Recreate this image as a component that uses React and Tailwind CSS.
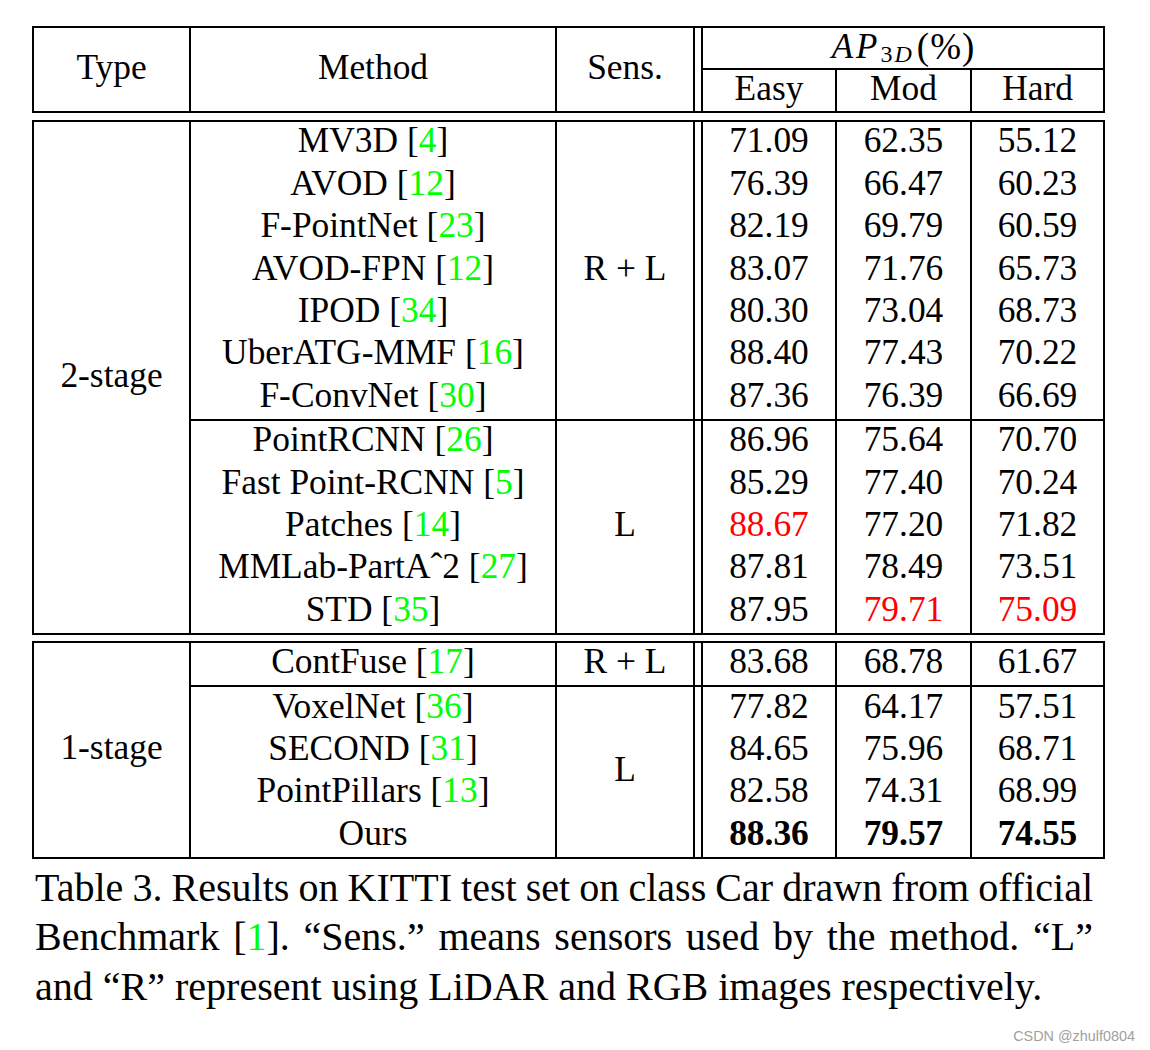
import React from 'react';

const twoStageA = [
  { name: 'MV3D', ref: '4', vals: ['71.09', '62.35', '55.12'] },
  { name: 'AVOD', ref: '12', vals: ['76.39', '66.47', '60.23'] },
  { name: 'F-PointNet', ref: '23', vals: ['82.19', '69.79', '60.59'] },
  { name: 'AVOD-FPN', ref: '12', vals: ['83.07', '71.76', '65.73'] },
  { name: 'IPOD', ref: '34', vals: ['80.30', '73.04', '68.73'] },
  { name: 'UberATG-MMF', ref: '16', vals: ['88.40', '77.43', '70.22'] },
  { name: 'F-ConvNet', ref: '30', vals: ['87.36', '76.39', '66.69'] },
];

const twoStageB = [
  { name: 'PointRCNN', ref: '26', vals: ['86.96', '75.64', '70.70'] },
  { name: 'Fast Point-RCNN', ref: '5', vals: ['85.29', '77.40', '70.24'] },
  { name: 'Patches', ref: '14', vals: ['88.67', '77.20', '71.82'], red: [0] },
  { name: 'MMLab-PartA\u02C62', ref: '27', vals: ['87.81', '78.49', '73.51'] },
  { name: 'STD', ref: '35', vals: ['87.95', '79.71', '75.09'], red: [1, 2] },
];

const oneStageA = [
  { name: 'ContFuse', ref: '17', vals: ['83.68', '68.78', '61.67'] },
];

const oneStageB = [
  { name: 'VoxelNet', ref: '36', vals: ['77.82', '64.17', '57.51'] },
  { name: 'SECOND', ref: '31', vals: ['84.65', '75.96', '68.71'] },
  { name: 'PointPillars', ref: '13', vals: ['82.58', '74.31', '68.99'] },
  { name: 'Ours', vals: ['88.36', '79.57', '74.55'], bold: true },
];

// text cells sit a touch above the geometric middle, like the LaTeX table
const cell = 'flex items-center justify-center pb-[4px]';
const valWidths = ['w-[132px]', 'w-[135px] border-l-2 border-black', 'w-[133px] border-l-2 border-black'];

const Ref = ({ n }) => (
  <span>
    {' '}[<span className="text-[#00ff00]">{n}</span>]
  </span>
);

const Section = ({ rows, sens, first }) => (
  <div className={'flex' + (first ? '' : ' border-t-2 border-black')}>
    <div className="w-[366px] border-l-2 border-black flex flex-col">
      {rows.map((r) => (
        <div key={r.name} className={'h-[42.4px] whitespace-pre ' + cell}>
          {r.name}
          {r.ref && <Ref n={r.ref} />}
        </div>
      ))}
    </div>
    <div className={'w-[138px] border-l-2 border-black ' + cell}>{sens}</div>
    <div className="w-[8px] border-l-2 border-black" />
    <div className="border-l-2 border-black flex flex-col">
      {rows.map((r) => (
        <div key={r.name} className="h-[42.4px] flex">
          {r.vals.map((v, i) => (
            <div
              key={i}
              className={
                valWidths[i] +
                ' ' +
                cell +
                (r.red && r.red.includes(i) ? ' text-[#ff0000]' : '') +
                (r.bold ? ' font-bold' : '')
              }
            >
              {v}
            </div>
          ))}
        </div>
      ))}
    </div>
  </div>
);

const Block = ({ type, sections, className }) => (
  <div className={'w-[1073px] border-2 border-black flex ' + className}>
    <div className={'w-[155px] ' + cell}>{type}</div>
    <div className="flex flex-col">
      {sections.map((s, i) => (
        <Section key={i} rows={s.rows} sens={s.sens} first={i === 0} />
      ))}
    </div>
  </div>
);

export default function App() {
  return (
    <div className="bg-white w-[1150px] h-[1050px] pt-[26px] pl-[32px] text-black font-['Liberation_Serif','Times_New_Roman',serif]">
      <div className="text-[35.4px] leading-none">
        {/* header */}
        <div className="w-[1073px] h-[87px] border-2 border-black flex">
          <div className={'w-[155px] ' + cell}>Type</div>
          <div className={'w-[366px] border-l-2 border-black ' + cell}>Method</div>
          <div className={'w-[138px] border-l-2 border-black ' + cell}>Sens.</div>
          <div className="w-[8px] border-l-2 border-black" />
          <div className="w-[402px] border-l-2 border-black flex flex-col">
            <div className="h-[40px] flex items-center justify-center pb-[3px]">
              <span className="italic text-[35px] tracking-[3px]">AP</span>
              <span className="text-[24px] mt-[14px] tracking-[2px]">
                3<span className="italic">D</span>
              </span>
              <span className="text-[37px] ml-[3px]">(</span>
              <span className="text-[37px] mx-[1px]">%</span>
              <span className="text-[37px]">)</span>
            </div>
            <div className="flex-1 border-t-2 border-black flex">
              <div className={'w-[132px] ' + cell}>Easy</div>
              <div className={'w-[135px] border-l-2 border-black ' + cell}>Mod</div>
              <div className={'w-[133px] border-l-2 border-black ' + cell}>Hard</div>
            </div>
          </div>
        </div>

        <Block
          className="mt-[7px]"
          type="2-stage"
          sections={[
            { rows: twoStageA, sens: 'R + L' },
            { rows: twoStageB, sens: 'L' },
          ]}
        />
        <Block
          className="mt-[6px]"
          type="1-stage"
          sections={[
            { rows: oneStageA, sens: 'R + L' },
            { rows: oneStageB, sens: 'L' },
          ]}
        />
      </div>

      {/* caption */}
      <div className="ml-[3px] mt-[4px] w-[1058px] text-[40px] leading-[49.5px]">
        <div className="text-justify [text-align-last:justify] whitespace-nowrap [word-spacing:-1.5px]">
          Table 3. Results on KITTI test set on class Car drawn from official
        </div>
        <div className="text-justify [text-align-last:justify]">
          Benchmark [<span className="text-[#00ff00]">1</span>]. {'\u201C'}Sens.{'\u201D'} means sensors used by the method. {'\u201C'}L{'\u201D'}
        </div>
        <div>and {'\u201C'}R{'\u201D'} represent using LiDAR and RGB images respectively.</div>
      </div>

      <div className="w-[1103px] mt-[18px] flex justify-end text-[14.4px] leading-none text-[#a0a0a0] font-['Liberation_Sans',Arial,sans-serif]">
        CSDN @zhulf0804
      </div>
    </div>
  );
}
